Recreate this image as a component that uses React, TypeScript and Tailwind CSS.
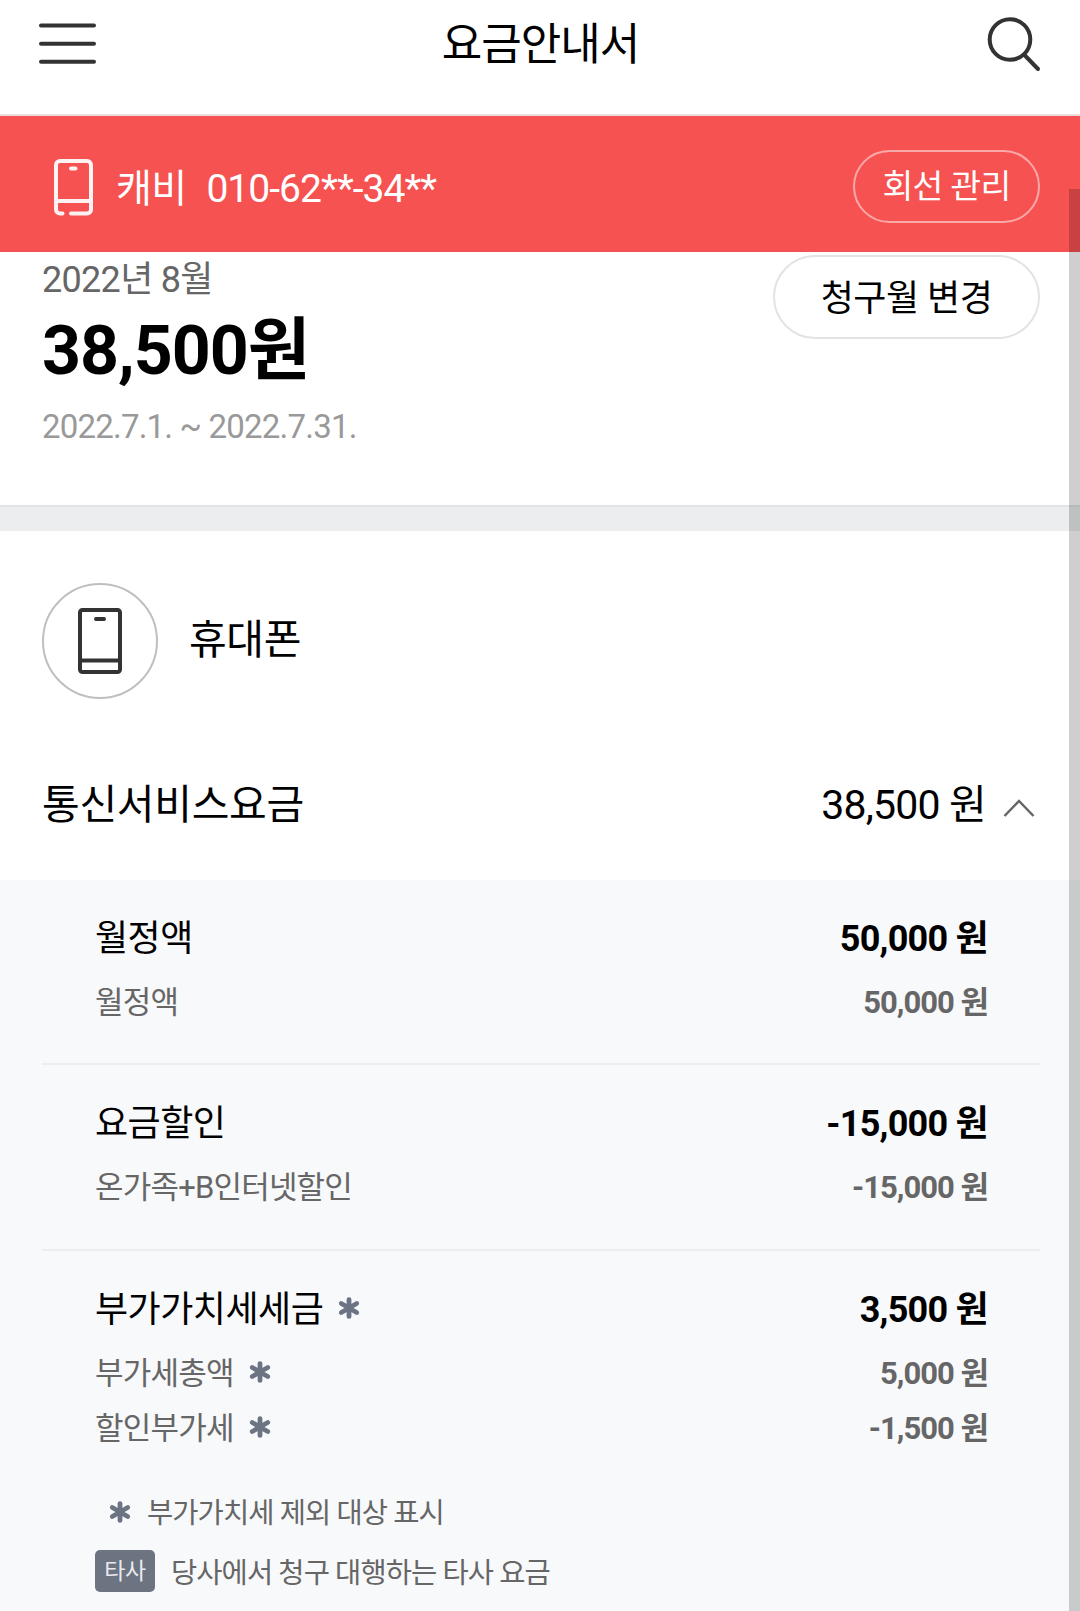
import { useState } from 'react';

interface BillItem {
  label: string;
  amount: string;
  vatExcluded?: boolean;
}

interface BillGroup extends BillItem {
  items: BillItem[];
}

const GROUPS: BillGroup[] = [
  { label: '월정액', amount: '50,000', items: [{ label: '월정액', amount: '50,000' }] },
  { label: '요금할인', amount: '-15,000', items: [{ label: '온가족+B인터넷할인', amount: '-15,000' }] },
  {
    label: '부가가치세세금',
    amount: '3,500',
    vatExcluded: true,
    items: [
      { label: '부가세총액', amount: '5,000', vatExcluded: true },
      { label: '할인부가세', amount: '-1,500', vatExcluded: true },
    ],
  },
];

function Asterisk({ className = '' }: { className?: string }) {
  return (
    <svg viewBox="0 0 22 24" className={`w-[22px] h-[24px] shrink-0 ${className}`} stroke="#6c7484" strokeWidth="4.8" strokeLinecap="round">
      <path d="M11 3.600v16.800M3.300 7.500l15.400 9M18.700 7.500L3.300 16.500" />
    </svg>
  );
}

function Header() {
  return (
    <header className="flex items-center justify-between h-[116px] pl-[38px] pr-[39px] pb-[26px] border-b-2 border-[#eedcdc]">
      <button aria-label="메뉴">
        <svg width="58" height="42" viewBox="0 0 58 42" stroke="#333" strokeWidth="4" strokeLinecap="round">
          <path d="M3 2.500h53M3 20.700h53M3 38.800h53" />
        </svg>
      </button>
      <h1 className="mt-[2px] text-[44px] leading-[60px] tracking-[-1px]">요금안내서</h1>
      <button aria-label="검색">
        <svg width="56" height="56" viewBox="0 0 56 56" fill="none" stroke="#333" strokeWidth="4" strokeLinecap="round">
          <circle cx="25" cy="23.500" r="20.300" />
          <path d="M39 38.500L53 53" />
        </svg>
      </button>
    </header>
  );
}

function LineBar() {
  return (
    <div className="flex items-center justify-between h-[136px] pt-[5px] pl-[54px] pr-10 bg-[#f65251] text-white">
      <div className="flex items-center text-[39px] leading-[52px]">
        <svg width="39" height="57" viewBox="0 0 39 57" fill="none" stroke="#fff2f2" strokeWidth="4" strokeLinecap="round" className="mt-[1px]">
          <path d="M8.500 54.500H6a4 4 0 0 1-4-4V6a4 4 0 0 1 4-4h27a4 4 0 0 1 4 4v44.500a4 4 0 0 1-4 4H17" />
          <path d="M2 42h35M17 9.500h4.500" />
        </svg>
        <span className="ml-[23px] mt-[4px] tracking-[-0.7px]">캐비</span>
        <span className="ml-[20px] mt-[4px] tracking-[-0.95px]">010-62**-34**</span>
      </div>
      <button className="w-[187px] h-[73px] rounded-full border-2 border-[#fba9a8] text-[33.5px] leading-[48px] tracking-[-0.7px]">
        회선 관리
      </button>
    </div>
  );
}

function Summary() {
  return (
    <section className="flex items-start justify-between h-[253px] pt-[3px] pl-[42px] pr-10">
      <div>
        <p className="mt-[3px] text-[36px] leading-[44px] tracking-[-0.7px] text-[#666]">2022년 8월</p>
        <p className="mt-[9px] text-[68px] leading-[80px] tracking-[-1px] font-bold">38,500원</p>
        <p className="mt-[16px] text-[33px] leading-[40px] tracking-[-0.8px] text-[#999]">2022.7.1. ~ 2022.7.31.</p>
      </div>
      <button className="w-[267px] h-[84px] pt-[3px] rounded-full border-2 border-[#e3e3e3] text-[36px] leading-[48px] tracking-[-0.5px]">
        청구월 변경
      </button>
    </section>
  );
}

function Group({ group }: { group: BillGroup }) {
  return (
    <div className="pt-[35px] pb-[33.4px] pl-[53px] pr-[52px]">
      <div className="flex items-center justify-between text-[36px] leading-[48px]">
        <span className="flex items-center tracking-[-0.5px]">
          {group.label}
          {group.vatExcluded && <Asterisk className="ml-[15px] mb-[3px]" />}
        </span>
        <span className="font-bold tracking-[-0.75px]">{group.amount} 원</span>
      </div>
      <ul className="mt-[12px] text-[31px] leading-[55px] text-[#666]">
        {group.items.map((item) => (
          <li key={item.label} className="flex items-center justify-between">
            <span className="flex items-center tracking-[-0.8px]">
              {item.label}
              {item.vatExcluded && <Asterisk className="ml-[15px] mb-[3px]" />}
            </span>
            <span className="font-bold tracking-[-1px]">{item.amount} 원</span>
          </li>
        ))}
      </ul>
    </div>
  );
}

export default function App() {
  const [open, setOpen] = useState(true);

  return (
    <div className="relative w-[1080px] h-[1611px] overflow-hidden bg-white text-black font-['Roboto','Noto_Sans_CJK_KR',sans-serif]">
      <Header />
      <LineBar />
      <Summary />
      <div className="h-[26px] border-t-2 border-[#e2e3e4] bg-[#ebedef]" />

      <div className="flex items-center pt-[52px] pl-[42px]">
        <div className="flex items-center justify-center w-[116px] h-[116px] rounded-full border-2 border-[#bfbfbf]">
          <svg width="44" height="66" viewBox="0 0 44 66" fill="none" stroke="#333" strokeWidth="4" strokeLinecap="round" className="mb-[1px]">
            <rect x="2" y="2" width="40" height="62" rx="2.500" />
            <path d="M2 52.500h40M18 11h8" />
          </svg>
        </div>
        <h2 className="ml-[31px] mb-[3px] text-[41px] leading-[56px] tracking-[-0.4px]">휴대폰</h2>
      </div>

      <button onClick={() => setOpen(!open)} className="flex items-center justify-between w-full h-[181px] pt-[30px] pl-[42px] pr-[45px] text-[41px] leading-[56px]">
        <span className="tracking-[-0.3px]">통신서비스요금</span>
        <span className="flex items-center tracking-[-0.8px]">
          38,500 원
          <svg width="32" height="20" viewBox="0 0 32 20" fill="none" stroke="#666" strokeWidth="2.500" className={`ml-[17px] mt-[6px] ${open ? '' : 'rotate-180'}`}>
            <path d="M1.500 18L16 3l14.500 15" />
          </svg>
        </span>
      </button>

      {open && (
        <section className="h-[731px] pl-[42px] pr-10 bg-[#f8f9fb]">
          <div className="divide-y-2 divide-[#eceeef]">
            {GROUPS.map((group) => (
              <Group key={group.label} group={group} />
            ))}
          </div>
          <div className="pl-[53px] text-[28.5px] leading-[40px] tracking-[-0.92px] text-[#666]">
            <p className="flex items-center mt-[5px] pl-[14px]">
              <Asterisk className="mr-4 mb-[4px]" />
              부가가치세 제외 대상 표시
            </p>
            <div className="flex items-center mt-[14px]">
              <span className="w-[60px] h-[42px] mr-4 rounded-[5px] bg-[#6c7482] text-center text-[23px] leading-[43px] tracking-[-0.5px] text-[#e8eaee]">타사</span>
              <p className="pt-[6px]">당사에서 청구 대행하는 타사 요금</p>
            </div>
          </div>
        </section>
      )}

      {/* Scroll thumb */}
      <div className="absolute right-0 top-[189px] bottom-0 w-[11px] bg-black/19" />
    </div>
  );
}
